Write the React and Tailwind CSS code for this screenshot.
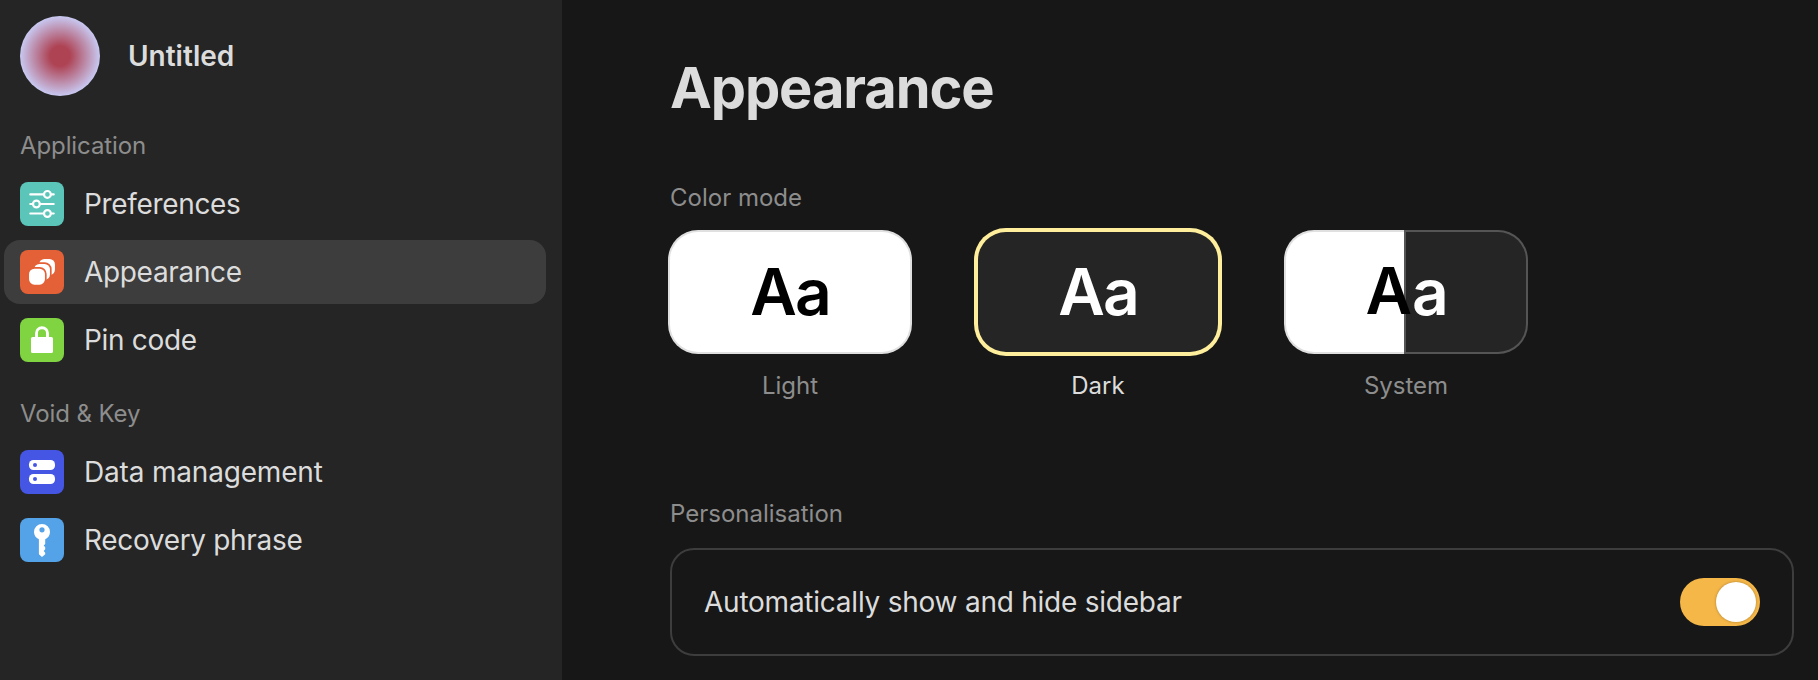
const PreferencesIcon = () => (
  <svg viewBox="0 0 44 44" className="size-11" fill="none" stroke="white" strokeWidth="2.2" strokeLinecap="round">
    <path d="M10.3 12.4H23.6M31.2 12.4H33.7M10.3 22H12.6M20.2 22H33.7M10.3 31.5H23.6M31.2 31.5H33.7" />
    <circle cx="27.4" cy="12.4" r="3.4" />
    <circle cx="16.4" cy="22" r="3.4" />
    <circle cx="27.4" cy="31.5" r="3.4" />
  </svg>
);

const AppearanceIcon = () => (
  <svg viewBox="0 0 44 44" className="size-11" fill="white" stroke="#e46036" strokeWidth="1.7">
    <rect x="18.2" y="8.2" width="17.6" height="17.6" rx="6.2" />
    <rect x="13.2" y="13.1" width="17.6" height="17.6" rx="6.2" />
    <rect x="8.2" y="17.9" width="17.6" height="17.6" rx="6.2" />
  </svg>
);

const PinIcon = () => (
  <svg viewBox="0 0 44 44" className="size-11" fill="white">
    <rect x="11" y="19" width="22" height="16" rx="1.6" />
    <path d="M16.5 20V15.2a5.5 5.5 0 0 1 11 0V20" fill="none" stroke="white" strokeWidth="2.9" />
  </svg>
);

const DataIcon = () => (
  <svg viewBox="0 0 44 44" className="size-11" fill="white">
    <rect x="9" y="10" width="26" height="10" rx="4.4" />
    <rect x="9" y="24" width="26" height="10" rx="4.4" />
    <circle cx="15" cy="15" r="2" fill="#4556e4" />
    <circle cx="15" cy="29" r="2" fill="#4556e4" />
  </svg>
);

const KeyIcon = () => (
  <svg viewBox="0 0 44 44" className="size-11">
    <path
      fill="white"
      fillRule="evenodd"
      d="M22 6a8 8 0 0 0-8 8c0 3.300 2 6 4.900 7.300V36.200L22 39l3.200-2.800V34.700L23.700 33l1.500-1.700V29.300L23.700 27.600l1.500-1.600V21.300C28 20 30 17.300 30 14a8 8 0 0 0-8-8Zm0 3.200a2.600 2.600 0 1 1 0 5.200a2.600 2.600 0 0 1 0-5.200Z"
    />
  </svg>
);

const NavItem = ({ icon, label, tile, active, tracking = "tracking-[-0.33px]" }) => (
  <div className={`flex h-16 items-center gap-5 rounded-2xl pl-4 ${active ? "bg-[#3d3d3d]" : ""}`}>
    <div className={`size-11 shrink-0 overflow-hidden rounded-lg ${tile}`}>{icon}</div>
    <span className={`text-[28px]/[44px] text-[#dcdcdc] ${tracking}`}>{label}</span>
  </div>
);

const Mode = ({ label, selected, children }) => (
  <div className="flex w-60 flex-col items-center">
    {children}
    <div className={`mt-4 text-2xl/9 ${selected ? "text-[#dcdcdc]" : "text-[#8d8d8d]"}`}>{label}</div>
  </div>
);

export default function App() {
  return (
    <div className="flex h-[680px] w-full overflow-hidden bg-[#171717] font-['Inter',sans-serif] text-[#dcdcdc]">
      <aside className="w-[562px] shrink-0 bg-[#252525] pr-4 pl-1">
        <div className="flex items-center gap-7 pt-4 pl-4">
          <div className="size-20 rounded-full bg-[radial-gradient(circle_closest-side,#ae4354_25%,#c8c9f2_100%)]" />
          <span className="text-[28px]/[44px] font-semibold">Untitled</span>
        </div>
        <div className="mt-8 pl-4 text-2xl/9 tracking-[-0.1px] text-[#8d8d8d]">Application</div>
        <nav className="mt-2 flex flex-col gap-1">
          <NavItem icon={<PreferencesIcon />} label="Preferences" tile="bg-[#5bc5b9]" />
          <NavItem icon={<AppearanceIcon />} label="Appearance" tile="bg-[#e46036]" active />
          <NavItem icon={<PinIcon />} label="Pin code" tile="bg-[#80d441]" />
        </nav>
        <div className="mt-6 pl-4 text-2xl/9 tracking-[-0.1px] text-[#8d8d8d]">Void &amp; Key</div>
        <nav className="mt-2 flex flex-col gap-1">
          <NavItem icon={<DataIcon />} label="Data management" tile="bg-[#4556e4]" tracking="tracking-[-0.18px]" />
          <NavItem icon={<KeyIcon />} label="Recovery phrase" tile="bg-[#54a3e8]" />
        </nav>
      </aside>

      <main className="flex-1 pt-14 pr-6 pl-[108px]">
        <h1 className="text-[56px]/[64px] font-bold tracking-[-1.1px]">Appearance</h1>
        <div className="mt-[60px] text-2xl/9 text-[#8d8d8d]">Color mode</div>
        <div className="mt-4 flex gap-[68px]">
          <Mode label="Light">
            <div className="flex h-30 w-60 items-center justify-center rounded-[28px] bg-white text-[64px]/[72px] font-semibold tracking-[-2px] text-black ring-2 ring-[#e0e0e0]">
              Aa
            </div>
          </Mode>
          <Mode label="Dark" selected>
            <div className="flex h-30 w-60 items-center justify-center rounded-[28px] bg-[#252525] text-[64px]/[72px] font-semibold tracking-[-2px] text-white ring-4 ring-[#ffee9c]">
              Aa
            </div>
          </Mode>
          <Mode label="System">
            <div className="flex h-30 w-60 text-[64px]/[72px] font-semibold">
              <div className="flex w-30 items-center justify-end rounded-l-[28px] bg-white text-black ring-2 ring-[#e0e0e0]">
                <span className="relative z-10 -mt-[3px] -mr-[6px]">A</span>
              </div>
              <div className="flex w-30 items-center rounded-r-[28px] bg-[#252525] pl-[6px] text-white ring-2 ring-[#555555]">a</div>
            </div>
          </Mode>
        </div>
        <div className="mt-[92px] text-2xl/9 text-[#8d8d8d]">Personalisation</div>
        <div className="mt-4 flex h-[108px] items-center justify-between rounded-3xl border-2 border-[#3d3d3d] px-8">
          <span className="text-[28px]/[44px] tracking-[-0.24px]">Automatically show and hide sidebar</span>
          <div className="flex h-12 w-20 items-center justify-end rounded-full bg-[#f5b748] p-1">
            <div className="size-10 rounded-full bg-white shadow-[0_0_3px_rgba(0,0,0,0.3)]" />
          </div>
        </div>
      </main>
    </div>
  );
}
